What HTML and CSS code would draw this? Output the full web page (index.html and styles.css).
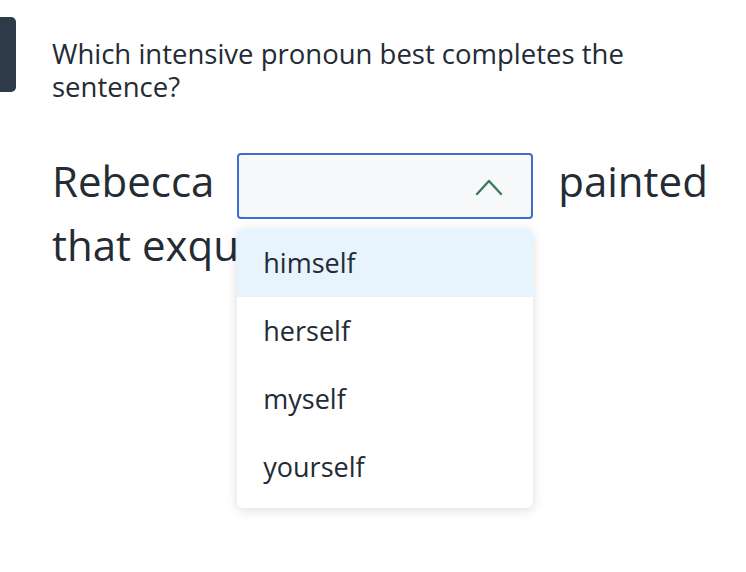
FILE: index.html
```html
<!DOCTYPE html>
<html lang="en">
<head>
  <meta charset="UTF-8" />
  <meta name="viewport" content="width=device-width, initial-scale=1.0"/>
  <title>Intensive pronouns</title>
  <link rel="stylesheet" href="styles.css">
</head>
<body>

  <div class="question-row">
    <div class="marker"></div>
    <div class="content">
      <p class="prompt">Which intensive pronoun best completes the sentence?</p>

      <p class="sentence">
        Rebecca
        <span class="select">
          <span class="select-box">
            <svg class="caret" width="28" height="18" viewBox="0 0 28 18">
              <path d="M2 16 L14 3 L26 16" fill="none" stroke="#3d7a5c" stroke-width="2.4" stroke-linecap="round" stroke-linejoin="round"/>
            </svg>
          </span>
          <span class="options">
            <span class="option active">himself</span>
            <span class="option">herself</span>
            <span class="option">myself</span>
            <span class="option">yourself</span>
          </span>
        </span>
        painted that exquisite mural.
      </p>
    </div>
  </div>

</body>
</html>
```

FILE: styles.css
```css
body {
  font-family: "Open Sans", "Noto Sans", sans-serif;
  margin: 0;
  padding: 0;
  min-height: 100vh;
  background-color: #fff;
  color: #232b35;
}

.question-row {
  display: flex;
  align-items: flex-start;
  padding-top: 17px;
  padding-bottom: 320px;
}

.marker {
  width: 16px;
  height: 75px;
  background-color: #2e3a48;
  border-radius: 0 5px 5px 0;
  flex-shrink: 0;
}

.content {
  padding-left: 36px;
  padding-right: 20px;
}

.prompt {
  font-size: 27.5px;
  line-height: 33px;
  margin: 20px 0 0;
}

.sentence {
  font-size: 42px;
  line-height: 64px;
  margin: 46px 0 0;
}

.select {
  position: relative;
  display: inline-block;
  vertical-align: middle;
  margin: -6px 14px -6px 12px;
}

.select-box {
  display: flex;
  align-items: center;
  justify-content: flex-end;
  box-sizing: border-box;
  width: 296px;
  height: 66px;
  padding-right: 28px;
  background-color: #f7f8f9;
  border: 2px solid #3d6dd3;
  border-radius: 4px;
}

.caret {
  display: block;
  margin-top: 2px;
}

.options {
  position: absolute;
  top: 76px;
  left: 0;
  width: 296px;
  display: flex;
  flex-direction: column;
  padding-bottom: 7px;
  background-color: #fff;
  border-radius: 6px;
  box-shadow: 0 2px 12px rgba(0, 0, 0, 0.14);
  z-index: 2;
}

.option {
  display: flex;
  align-items: center;
  height: 68px;
  padding-left: 26px;
  font-size: 27px;
  line-height: 1;
  color: #232b35;
}

.option.active {
  background-color: #e8f4fd;
  border-radius: 6px 6px 0 0;
}
```
